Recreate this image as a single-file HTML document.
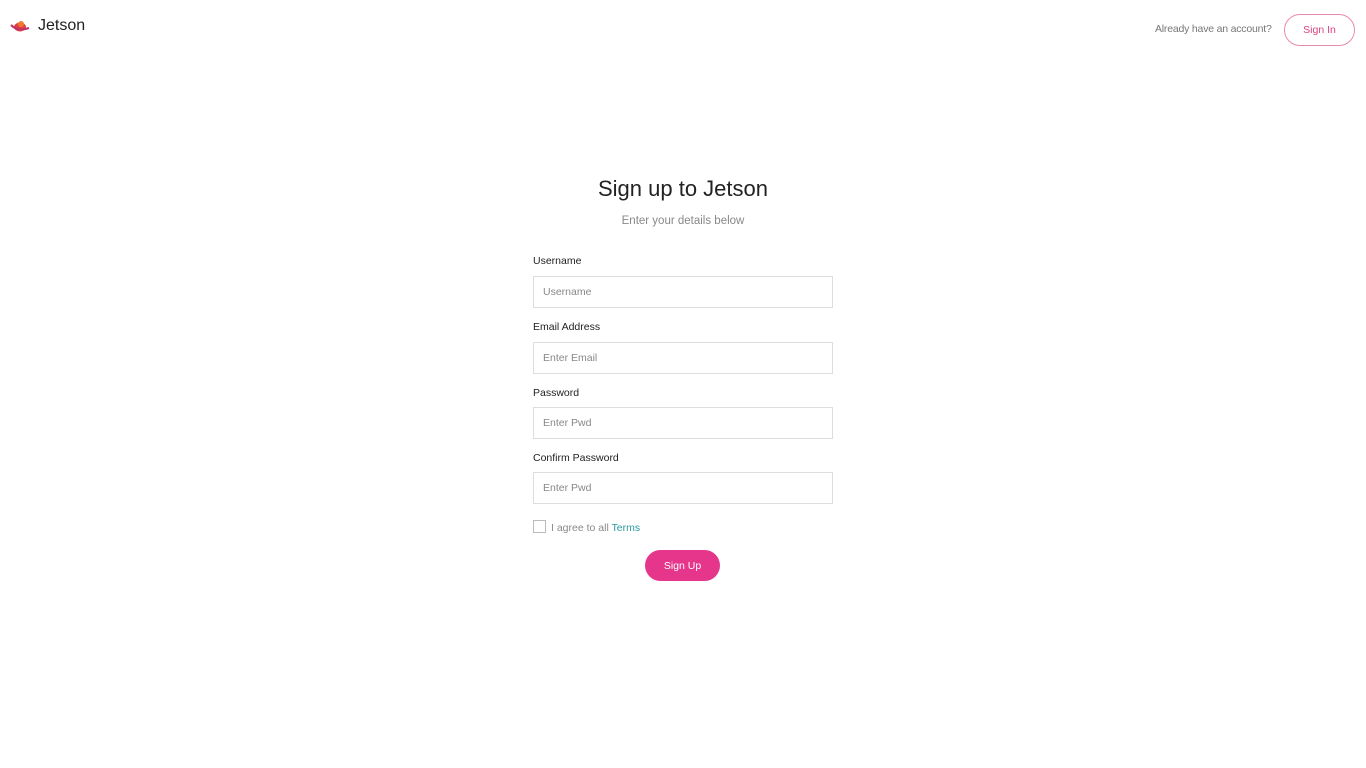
<!DOCTYPE html>
<html><head><meta charset="utf-8"><style>
body{margin:0;width:1366px;height:768px;background:#fff;font-family:"Liberation Sans",sans-serif;position:relative;overflow:hidden}
.abs{position:absolute}
.lbl{position:absolute;left:533px;font-size:10.5px;color:#222}
.inp{position:absolute;left:533px;width:298px;height:30px;border:1px solid #ddd;font-size:10.5px;color:#888;box-sizing:content-box}
.inp span{position:absolute;left:9px;top:9px}
</style></head><body>
<svg class="abs" style="left:10px;top:19px" width="20" height="14" viewBox="0 0 20 14"><ellipse cx="10" cy="8" rx="6" ry="4.5" fill="#e04040"/><circle cx="11" cy="5" r="3" fill="#f07a30"/><path d="M1 6 Q8 13 19 9" stroke="#c0306a" stroke-width="2" fill="none"/></svg>
<div class="abs" style="left:38px;top:17px;font-size:16px;color:#222">Jetson</div>
<div class="abs" style="left:1155px;top:23px;font-size:10.5px;color:#777;letter-spacing:-0.2px">Already have an account?</div>
<div class="abs" style="left:1284px;top:14px;width:69px;height:30px;border:1px solid #e88ab0;border-radius:16px;font-size:10.5px;color:#d9447f;text-align:center;line-height:31px">Sign In</div>
<div class="abs" style="left:0;width:1366px;top:176px;text-align:center;font-size:22px;color:#222">Sign up to Jetson</div>
<div class="abs" style="left:0;width:1366px;top:215px;text-align:center;font-size:11.5px;color:#888">Enter your details below</div>
<div class="lbl" style="top:255px">Username</div>
<div class="inp" style="top:276px"><span>Username</span></div>
<div class="lbl" style="top:321px">Email Address</div>
<div class="inp" style="top:342px"><span>Enter Email</span></div>
<div class="lbl" style="top:387px">Password</div>
<div class="inp" style="top:407px"><span>Enter Pwd</span></div>
<div class="lbl" style="top:452px">Confirm Password</div>
<div class="inp" style="top:472px"><span>Enter Pwd</span></div>
<div class="abs" style="left:533px;top:520px;width:11px;height:11px;border:1px solid #bbb"></div>
<div class="abs" style="left:551px;top:522px;font-size:10.5px;color:#888">I agree to all <span style="color:#2a9aa0">Terms</span></div>
<div class="abs" style="left:645px;top:550px;width:75px;height:31px;border-radius:16px;background:#e5368c;color:#fff;font-size:10.5px;text-align:center;line-height:32px">Sign Up</div>
</body></html>
